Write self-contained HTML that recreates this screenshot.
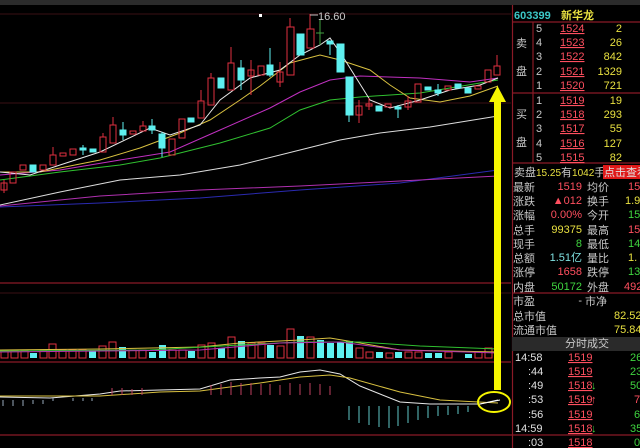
<!DOCTYPE html>
<html><head><meta charset="utf-8"><style>
body{margin:0;background:#000;width:640px;height:448px;overflow:hidden;font-family:"Liberation Sans","Noto Sans CJK SC",sans-serif}
svg{display:block}
text{font-family:"Liberation Sans","Noto Sans CJK SC",sans-serif;font-size:11px}
.l{fill:#c8c8c8}.r{fill:#ff4f5f}.g{fill:#3fd43f}.y{fill:#e8e040}.w{fill:#e0e0e0}
</style></head><body>
<svg width="640" height="448" viewBox="0 0 640 448">
<rect width="640" height="448" fill="#000"/>
<rect width="640" height="5" fill="#2b2b2b"/>
<!-- grid lines -->
<line x1="0" y1="14" x2="511" y2="14" stroke="#3a1014" stroke-width="1"/>
<line x1="0" y1="103" x2="511" y2="103" stroke="#3a1014"/>
<line x1="0" y1="283" x2="511" y2="283" stroke="#8a1a26" stroke-width="1.2"/>
<line x1="0" y1="293" x2="511" y2="293" stroke="#3a1014"/>
<line x1="0" y1="362" x2="511" y2="362" stroke="#8a1a26" stroke-width="1.2"/>
<line x1="0" y1="435" x2="640" y2="435" stroke="#8a1a26" stroke-width="1.2"/>
<line x1="512.5" y1="5" x2="512.5" y2="448" stroke="#8a1a26" stroke-width="1.2"/>
<!-- MA lines -->
<g fill="none" stroke-width="1">
<polyline stroke="#2a2ab0" points="0,207 100,203 200,198 300,190 400,183 498,170"/>
<polyline stroke="#b030b0" points="0,206 100,196 200,190 300,186 400,181 498,176"/>
<polyline stroke="#ddd" points="0,205 60,192 120,180 180,175 240,165 300,150 340,140 380,133 430,127 498,116"/>
<polyline stroke="#30c030" points="0,180 60,172 120,165 160,158 220,143 270,128 300,110 330,100 360,97 420,93 498,80"/>
<polyline stroke="#c030c0" points="0,175 60,170 120,160 170,152 220,130 270,108 300,92 330,80 360,76 420,78 470,82 498,78"/>
<polyline stroke="#d8c040" points="0,172 40,172 100,160 140,148 180,133 210,120 240,100 260,86 290,63 320,55 340,60 370,70 390,85 410,98 440,102 470,96 498,86"/>
<polyline stroke="#e8e8e8" points="0,172 30,175 60,165 100,152 150,128 170,135 200,125 220,100 250,78 280,70 300,55 320,45 330,38 345,60 370,100 390,108 420,100 450,90 480,85 498,78"/>
</g>
<!-- candles -->
<g stroke="#e03040" fill="none" stroke-width="1">
<line x1="4" y1="180" x2="4" y2="193"/><rect x="1" y="183" width="6" height="7"/>
<rect x="10" y="172" width="6" height="11"/><rect x="20" y="165" width="6" height="5"/>
<rect x="40" y="165" width="6" height="5"/><line x1="53" y1="147" x2="53" y2="155"/><rect x="50" y="155" width="6" height="10"/>
<rect x="60" y="153" width="6" height="3"/><rect x="70" y="149" width="6" height="6"/>
<line x1="103" y1="133" x2="103" y2="137"/><rect x="100" y="137" width="6" height="15"/>
<line x1="113" y1="117" x2="113" y2="125"/><rect x="110" y="125" width="6" height="18"/>
<rect x="130" y="131" width="6" height="3"/><line x1="143" y1="121" x2="143" y2="126"/><rect x="140" y="126" width="6" height="5"/>
<rect x="169" y="139" width="6" height="16"/><rect x="179" y="119" width="6" height="19"/>
<line x1="201" y1="90" x2="201" y2="101"/><rect x="198" y="101" width="6" height="17"/>
<line x1="211" y1="73" x2="211" y2="78"/><rect x="208" y="78" width="6" height="27"/>
<line x1="231" y1="47" x2="231" y2="63"/><rect x="228" y="63" width="6" height="27"/>
<line x1="251" y1="60" x2="251" y2="95"/><rect x="248" y="70" width="6" height="6"/>
<rect x="258" y="66" width="6" height="9"/><line x1="280" y1="62" x2="280" y2="87"/><rect x="277" y="72" width="6" height="10"/>
<line x1="290" y1="18" x2="290" y2="27"/><rect x="287" y="27" width="7" height="48"/>
<line x1="310" y1="14" x2="310" y2="29"/><rect x="307" y="29" width="7" height="19"/>
<line x1="359" y1="100" x2="359" y2="123"/><rect x="356" y="106" width="6" height="9"/>
<line x1="369" y1="98" x2="369" y2="110"/><rect x="366" y="104" width="6" height="2"/>
<rect x="385" y="104" width="6" height="3"/><line x1="408" y1="96" x2="408" y2="110"/><rect x="405" y="101" width="6" height="6"/>
<rect x="415" y="84" width="6" height="18"/><rect x="445" y="86" width="6" height="4"/>
<rect x="475" y="86" width="6" height="3"/><rect x="485" y="70" width="6" height="12"/>
<line x1="497" y1="55" x2="497" y2="66"/><rect x="494" y="66" width="6" height="9"/>
</g>
<g fill="#5ef0f0" stroke="#5ef0f0" stroke-width="1">
<rect x="30" y="165" width="6" height="7"/><rect x="80" y="148" width="6" height="2"/><line x1="83" y1="145" x2="83" y2="155"/>
<rect x="90" y="149" width="6" height="3"/><line x1="123" y1="122" x2="123" y2="140"/><rect x="120" y="130" width="6" height="5"/>
<line x1="152" y1="119" x2="152" y2="134"/><rect x="149" y="126" width="6" height="4"/>
<line x1="162" y1="132" x2="162" y2="157"/><rect x="159" y="134" width="6" height="14"/>
<rect x="188" y="118" width="6" height="4"/><rect x="218" y="78" width="6" height="10"/>
<line x1="241" y1="60" x2="241" y2="90"/><rect x="238" y="68" width="6" height="12"/>
<line x1="270" y1="48" x2="270" y2="77"/><rect x="267" y="65" width="6" height="10"/>
<rect x="297" y="34" width="7" height="21"/><line x1="320" y1="20" x2="320" y2="45" stroke="#3fa03f"/><line x1="316" y1="33" x2="324" y2="33" stroke="#3fa03f"/>
<line x1="330" y1="41" x2="330" y2="55"/><rect x="327" y="41" width="6" height="3"/>
<rect x="337" y="44" width="7" height="28"/><line x1="349" y1="77" x2="349" y2="122"/><rect x="346" y="77" width="7" height="38"/>
<rect x="376" y="106" width="6" height="5"/><line x1="398" y1="105" x2="398" y2="118"/><rect x="395" y="107" width="6" height="2"/>
<rect x="425" y="87" width="6" height="3"/><line x1="438" y1="84" x2="438" y2="96"/><rect x="435" y="90" width="6" height="3"/>
<rect x="455" y="84" width="6" height="4"/><rect x="465" y="88" width="6" height="5"/>
</g>
<rect x="259" y="14" width="3" height="3" fill="#fff"/>
<line x1="310" y1="15" x2="318" y2="15" stroke="#bbb"/><text x="318" y="20" class="l" font-size="9">16.60</text>
<!-- volume -->
<g stroke="#e03040" fill="none">
<rect x="1" y="350" width="7" height="8"/><rect x="11" y="350" width="7" height="8"/><rect x="21" y="350" width="7" height="8"/>
<rect x="40" y="350" width="7" height="8"/><rect x="49" y="344" width="7" height="14"/><rect x="59" y="350" width="7" height="8"/>
<rect x="69" y="350" width="7" height="8"/><rect x="79" y="350" width="7" height="8"/><rect x="99" y="346" width="7" height="12"/>
<rect x="109" y="342" width="7" height="16"/><rect x="129" y="350" width="7" height="8"/><rect x="139" y="350" width="7" height="8"/>
<rect x="169" y="350" width="7" height="8"/><rect x="179" y="350" width="7" height="8"/><rect x="198" y="345" width="7" height="13"/>
<rect x="208" y="343" width="7" height="15"/><rect x="228" y="337" width="7" height="21"/><rect x="248" y="343" width="7" height="15"/>
<rect x="258" y="343" width="7" height="15"/><rect x="277" y="346" width="7" height="12"/><rect x="287" y="329" width="7" height="29"/>
<rect x="307" y="337" width="7" height="21"/><rect x="356" y="348" width="7" height="10"/><rect x="366" y="352" width="7" height="6"/>
<rect x="386" y="353" width="7" height="5"/><rect x="405" y="352" width="7" height="6"/><rect x="415" y="352" width="7" height="6"/>
<rect x="445" y="352" width="7" height="6"/><rect x="475" y="352" width="7" height="6"/><rect x="485" y="348" width="7" height="10"/>
</g>
<g fill="#5ef0f0">
<rect x="30" y="353" width="7" height="5"/><rect x="89" y="350" width="7" height="8"/><rect x="119" y="347" width="7" height="11"/>
<rect x="149" y="352" width="7" height="6"/><rect x="159" y="345" width="7" height="13"/><rect x="188" y="351" width="7" height="7"/>
<rect x="218" y="348" width="7" height="10"/><rect x="238" y="341" width="7" height="17"/><rect x="267" y="345" width="7" height="13"/>
<rect x="297" y="336" width="7" height="22"/><rect x="317" y="340" width="7" height="18"/><rect x="327" y="343" width="7" height="15"/>
<rect x="337" y="342" width="7" height="16"/><rect x="346" y="341" width="7" height="17"/><rect x="376" y="352" width="7" height="6"/>
<rect x="395" y="352" width="7" height="6"/><rect x="425" y="353" width="7" height="5"/><rect x="435" y="353" width="7" height="5"/>
<rect x="465" y="354" width="7" height="4"/>
</g>
<g fill="none">
<polyline stroke="#d8c040" points="0,350 100,349 200,347 240,343 300,340 330,338 360,343 400,350 498,352"/>
<polyline stroke="#30c030" points="0,351 150,350 240,345 300,342 360,342 420,346 498,349"/>
<polyline stroke="#b030b0" points="0,352 200,350 280,343 340,342 400,350 498,353"/>
</g>
<!-- MACD -->
<g fill="none">
<polyline stroke="#e8e8e8" points="0,397 50,398 100,394 120,391 160,390 200,389 230,380 260,378 280,377 300,372 320,370 340,374 360,386 400,402 430,404 480,404 498,400"/>
<polyline stroke="#d8c040" points="0,396 100,396 160,392 200,391 260,383 300,377 330,375 350,378 400,392 440,400 498,403"/>
</g>
<g stroke="#c04060" stroke-width="1">
<path d="M211,395v-10M221,395v-11M231,395v-13M241,395v-12M251,395v-12M261,395v-11M270,395v-11M280,395v-10M290,395v-12M300,395v-11M310,395v-12M320,395v-11M330,395v-9M112,395v-7M122,395v-7M132,395v-6M142,395v-7"/>
</g>
<g stroke="#9ab" stroke-width="1"><path d="M3,406v-6M13,406v-6M23,406v-6M33,404v-4M43,404v-4M53,401v-3M73,401v-3M83,401v-3M92,401v-3"/></g>
<g stroke="#60c8c8"><path d="M349,406v14M359,406v17M369,406v19M379,406v21M389,406v22M398,406v20M408,406v17M418,406v14M428,406v12M438,406v10M448,406v9M458,406v8M468,406v6"/></g>
<!-- arrow -->
<rect x="494" y="100" width="7" height="290" fill="#f5f500"/>
<polygon points="497.5,86 489,102 506,102" fill="#f5f500"/>
<ellipse cx="494" cy="402" rx="16" ry="10" fill="none" stroke="#f5f500" stroke-width="2"/>
<line x1="480" y1="404" x2="500" y2="400" stroke="#fff"/>
<!-- right panel -->
<text x="514" y="19" font-size="13" font-weight="bold" fill="#3cc8c8">603399</text>
<text x="561" y="19" font-size="13" font-weight="bold" class="y">新华龙</text>
<g stroke="#8a1a26" stroke-width="1.2">
<line x1="512" y1="22" x2="640" y2="22"/><line x1="512" y1="93" x2="640" y2="93"/><line x1="512" y1="163" x2="640" y2="163"/>
<line x1="512" y1="293" x2="640" y2="293"/><line x1="533" y1="22" x2="533" y2="163"/>
</g>
<g font-size="12" class="w">
<text x="516" y="47" class="l">卖</text><text x="516" y="75" class="l">盘</text>
<text x="516" y="118" class="l">买</text><text x="516" y="146" class="l">盘</text>
</g>
<g class="l" font-size="10">
<text x="536" y="32">5</text><text x="536" y="46">4</text><text x="536" y="60">3</text><text x="536" y="75">2</text><text x="536" y="89">1</text>
<text x="536" y="104">1</text><text x="536" y="118">2</text><text x="536" y="132">3</text><text x="536" y="147">4</text><text x="536" y="161">5</text>
</g>
<g class="r" font-size="10" text-decoration="underline">
<text x="560" y="32">1524</text><text x="560" y="46">1523</text><text x="560" y="60">1522</text><text x="560" y="75">1521</text><text x="560" y="89">1520</text>
<text x="560" y="104">1519</text><text x="560" y="118">1518</text><text x="560" y="132">1517</text><text x="560" y="147">1516</text><text x="560" y="161">1515</text>
</g>
<g class="y" font-size="10" text-anchor="end">
<text x="622" y="32">2</text><text x="622" y="46">26</text><text x="622" y="60">842</text><text x="622" y="75">1329</text><text x="622" y="89">721</text>
<text x="622" y="104">19</text><text x="622" y="118">293</text><text x="622" y="132">55</text><text x="622" y="147">127</text><text x="622" y="161">82</text>
</g>
<text x="514" y="176" class="l" font-size="11">卖盘<tspan class="y" font-size="10">15.25</tspan>有<tspan class="y" font-size="10">1042</tspan>手</text>
<rect x="603" y="165" width="37" height="14" fill="#e01818"/>
<text x="604" y="176" class="w" font-size="11">点击查看</text>
<g font-size="12" class="l">
<text x="513" y="191">最新</text><text x="513" y="205">涨跌</text><text x="513" y="219">涨幅</text><text x="513" y="234">总手</text>
<text x="513" y="248">现手</text><text x="513" y="262">总额</text><text x="513" y="276">涨停</text><text x="513" y="291">内盘</text>
<text x="587" y="191">均价</text><text x="587" y="205">换手</text><text x="587" y="219">今开</text><text x="587" y="234">最高</text>
<text x="587" y="248">最低</text><text x="587" y="262">量比</text><text x="587" y="276">跌停</text><text x="587" y="291">外盘</text>
<text x="513" y="305">市盈</text><text x="585" y="305">市净</text><text x="513" y="320">总市值</text><text x="513" y="334">流通市值</text>
</g>
<g font-size="10" text-anchor="end">
<text x="582" y="190" class="r">1519</text><text x="582" y="204" class="r">▲012</text><text x="582" y="218" class="r">0.00%</text>
<text x="582" y="233" class="y">99375</text><text x="582" y="247" class="g">8</text><text x="582" y="261" fill="#7fe0e0">1.51亿</text>
<text x="582" y="275" class="r">1658</text><text x="582" y="290" class="g">50172</text><text x="582" y="304" class="l">-</text>
</g>
<g font-size="10">
<text x="628" y="190" class="r">15</text><text x="625" y="204" class="y">1.99</text><text x="628" y="218" class="g">15</text>
<text x="628" y="233" class="r">15</text><text x="628" y="247" class="g">14</text><text x="628" y="261" class="y">1.</text>
<text x="628" y="275" class="g">13</text><text x="624" y="290" class="r">492</text>
<text x="614" y="319" class="y">82.52</text><text x="614" y="333" class="y">75.84</text>
</g>
<rect x="512" y="337" width="128" height="14" fill="#2a2a2a"/>
<text x="565" y="347" class="l" font-size="10">分时成交</text>
<g font-size="10" class="w">
<text x="515" y="361">14:58</text><text x="528" y="375" font-size="8">:44</text><text x="528" y="389" font-size="8">:49</text>
<text x="528" y="403" font-size="8">:53</text><text x="528" y="418" font-size="8">:56</text><text x="515" y="432">14:59</text><text x="528" y="446" font-size="8">:03</text>
</g>
<g font-size="10" class="r" text-decoration="underline">
<text x="568" y="361">1519</text><text x="568" y="375">1519</text><text x="568" y="389">1518</text><text x="568" y="403">1519</text>
<text x="568" y="418">1519</text><text x="568" y="432">1518</text><text x="568" y="446">1518</text>
</g>
<text x="591" y="389" class="g" font-size="10">↓</text><text x="591" y="403" class="r" font-size="10">↑</text><text x="591" y="432" class="g" font-size="10">↓</text>
<g font-size="10" class="g">
<text x="630" y="361">26</text><text x="630" y="375">23</text><text x="630" y="389">50</text><text x="634" y="403" class="r">7</text>
<text x="634" y="418">6</text><text x="630" y="432">35</text><text x="634" y="446">0</text>
</g>
</svg>
</body></html>
